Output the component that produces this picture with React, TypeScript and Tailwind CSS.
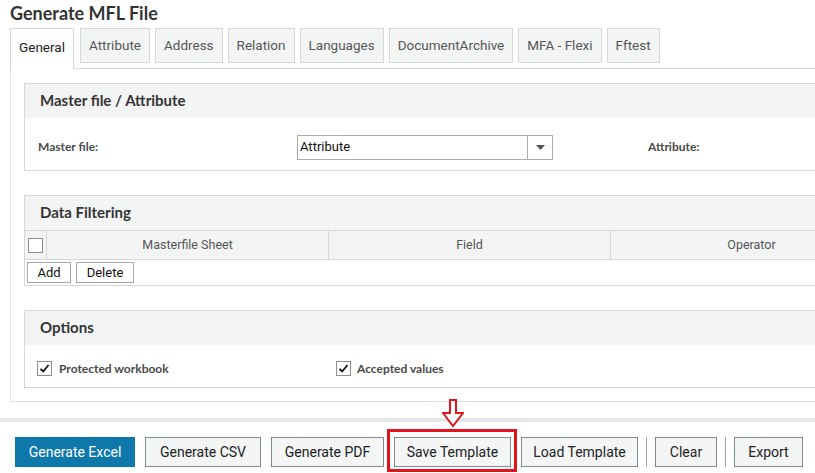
import React from 'react';

const tabs = ['Attribute', 'Address', 'Relation', 'Languages', 'DocumentArchive', 'MFA - Flexi', 'Fftest'];
const columns = ['Masterfile Sheet', 'Field', 'Operator'];

function SectionHeader({ title }: { title: string }) {
  return (
    <div className="h-[34px] bg-[#f3f5f5] pl-[15px] pb-[2px] flex items-center font-['Lato',sans-serif] font-bold text-[15px] text-[#333]">
      {title}
    </div>
  );
}

function CheckBox({ checked }: { checked?: boolean }) {
  return (
    <span className="w-[15px] h-[15px] border border-[#8a8f93] bg-white flex items-center justify-center shrink-0">
      {checked && (
        <svg width="11" height="11" viewBox="0 0 11 11">
          <path d="M1.5 5.8 L4.2 8.5 L9.5 2" fill="none" stroke="#111" strokeWidth="1.8" />
        </svg>
      )}
    </span>
  );
}

function FooterButton({ label, width }: { label: string; width: string }) {
  return (
    <button
      className={`${width} h-[30px] border border-[#7d8a91] bg-[#f4f6f6] text-[14px] text-[#222] flex items-center justify-center`}
    >
      {label}
    </button>
  );
}

export default function App() {
  return (
    <div className="w-[815px] h-[473px] overflow-hidden bg-white font-['Roboto',sans-serif]">
      <h1 className="h-[28px] pl-[10px] pt-[1px] font-['Lato',sans-serif] font-bold text-[18px] leading-[24px] text-[#333]">
        Generate MFL File
      </h1>

      {/* tabs */}
      <div className="flex pl-[10px] h-[41px]">
        <div className="shrink-0 h-[41px] w-[64px] border-l border-t border-r border-[#d5d8da] bg-white flex items-start justify-center pt-[8px] text-[13.5px] text-[#222]">
          General
        </div>
        <div className="w-[1200px] shrink-0 border-b border-[#d5d8da] flex items-start gap-[5px] pl-[6px]">
          {tabs.map((tab) => (
            <div
              key={tab}
              className="shrink-0 h-[35px] px-[8px] border border-[#d5d8da] bg-[#f3f5f5] flex items-center text-[13.5px] text-[#555] whitespace-nowrap"
            >
              {tab}
            </div>
          ))}
        </div>
      </div>

      {/* tab panel */}
      <div className="ml-[10px] w-[1200px] border-l border-b border-[#dcdfe0] pt-[14px] pb-[13px] pl-[13px] flex flex-col gap-[24px]">
        <div className="border border-[#d5d8da]">
          <SectionHeader title="Master file / Attribute" />
          <div className="h-[52px] pt-[6px] pl-[13px] flex items-center font-['Lato',sans-serif] font-bold text-[12px] text-[#4a4a4a]">
            <span className="w-[259px]">Master file:</span>
            <div className="w-[256px] h-[25px] border border-[#a9aeb1] flex font-['Roboto',sans-serif] font-normal text-[13px] text-[#111]">
              <span className="flex-1 flex items-center pl-[2px]">Attribute</span>
              <span className="w-[25px] border-l border-[#a9aeb1] flex items-center justify-center">
                <svg width="9" height="5" viewBox="0 0 9 5">
                  <path d="M0 0 L9 0 L4.5 5 Z" fill="#555" />
                </svg>
              </span>
            </div>
            <span className="ml-[95px] w-[259px]">Attribute:</span>
          </div>
        </div>

        <div className="border border-[#d5d8da]">
          <SectionHeader title="Data Filtering" />
          <div className="flex h-[29px] border-t border-[#d5d8da] bg-[#f3f5f5] text-[12.5px] text-[#555]">
            <div className="w-[22px] border-r border-[#d5d8da] flex items-center justify-center">
              <CheckBox />
            </div>
            {columns.map((col) => (
              <div key={col} className="w-[282px] border-r border-[#d5d8da] flex items-center justify-center">
                {col}
              </div>
            ))}
          </div>
          <div className="h-[26px] border-t border-[#d5d8da] flex items-center gap-[5px] pl-[2px] text-[13px] text-[#111]">
            <button className="w-[44px] h-[21px] border border-[#a3a8ab] bg-white flex items-center justify-center">Add</button>
            <button className="w-[58px] h-[21px] border border-[#a3a8ab] bg-white flex items-center justify-center">Delete</button>
          </div>
        </div>

        <div className="border border-[#d5d8da]">
          <SectionHeader title="Options" />
          <div className="h-[42px] pt-[5px] pl-[12px] flex items-center font-['Lato',sans-serif] font-bold text-[12px] text-[#4a4a4a]">
            <label className="w-[299px] flex items-center gap-[7px]">
              <CheckBox checked />
              Protected workbook
            </label>
            <label className="flex items-center gap-[6px]">
              <CheckBox checked />
              Accepted values
            </label>
          </div>
        </div>
      </div>

      <div className="mt-[16px] h-[4px] bg-[#e5e7e8]" />

      {/* footer buttons */}
      <div className="pt-[15px] pl-[15px] flex items-center">
        <button className="w-[120px] h-[30px] bg-[#0f78ab] text-white text-[14px] flex items-center justify-center">
          Generate Excel
        </button>
        <div className="ml-[10px]"><FooterButton label="Generate CSV" width="w-[116px]" /></div>
        <div className="ml-[10px]"><FooterButton label="Generate PDF" width="w-[113px]" /></div>
        <div className="ml-[10px] relative">
          <FooterButton label="Save Template" width="w-[117px]" />
          <span className="absolute -left-[7px] -top-[8px] -right-[6px] -bottom-[5px] border-[3px] border-[#e3141d] pointer-events-none" />
          <svg className="absolute left-[48px] -top-[38px]" width="22" height="28" viewBox="0 0 22 28">
            <polygon points="8,1 14,1 14,14 21,14 11,27 1,14 8,14" fill="white" stroke="#e3141d" strokeWidth="2" />
          </svg>
        </div>
        <div className="ml-[10px]"><FooterButton label="Load Template" width="w-[117px]" /></div>
        <span className="ml-[8px] w-px h-[30px] bg-[#9aa3a8]" />
        <div className="ml-[8px]"><FooterButton label="Clear" width="w-[62px]" /></div>
        <span className="ml-[8px] w-px h-[30px] bg-[#9aa3a8]" />
        <div className="ml-[8px]"><FooterButton label="Export" width="w-[69px]" /></div>
      </div>
    </div>
  );
}
